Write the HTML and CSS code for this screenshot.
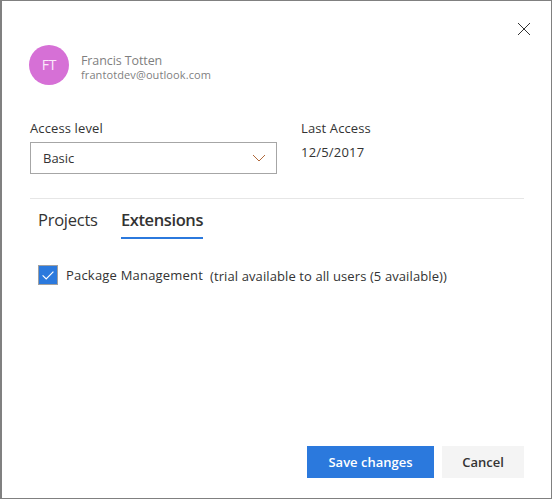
FILE: index.html
```html
<!DOCTYPE html>
<html lang="en">
<head>
<meta charset="utf-8">
<title>Manage user</title>
<link rel="stylesheet" href="styles.css">
</head>
<body>
<main class="dialog">
  <button class="close" aria-label="Close"><svg width="14" height="14" viewBox="0 0 14 14"><path d="M1 1 13 13M13 1 1 13"/></svg></button>
  <header class="user">
    <div class="avatar"><span>FT</span></div>
    <div class="identity">
      <span class="name">Francis Totten</span>
      <span class="email">frantotdev@outlook.com</span>
    </div>
  </header>
  <section class="access">
    <div class="level">
      <span class="label level-label">Access level</span>
      <div class="select"><span class="basic">Basic</span><svg width="14" height="8" viewBox="0 0 14 8"><path d="M1 1 7 7 13 1"/></svg></div>
    </div>
    <div class="last">
      <span class="label last-label">Last Access</span>
      <span class="date">12/5/2017</span>
    </div>
  </section>
  <nav class="tabs">
    <span class="tab projects">Projects</span>
    <span class="tab active">Extensions</span>
  </nav>
  <div class="option">
    <span class="checkbox"><svg width="12" height="9" viewBox="0 0 12 9"><path d="M.6 4.3 4.2 7.9 11.4.7"/></svg></span>
    <span class="package">Package Management</span>
    <span class="note">(trial available to all users (5 available))</span>
  </div>
  <footer class="actions">
    <button class="btn primary"><span>Save changes</span></button>
    <button class="btn cancel"><span>Cancel</span></button>
  </footer>
</main>
</body>
</html>
```
FILE: styles.css
```css
* { box-sizing: border-box; }
body { margin: 0; }
.dialog {
  position: relative;
  display: flex;
  flex-direction: column;
  width: 552px;
  height: 499px;
  padding: 44px 27px 20px 27px;
  border: 1px solid #808080;
  border-left-width: 2px;
  background: #fff;
  color: #333;
  font: 13px/18px "Open Sans", "Noto Sans", sans-serif;
  white-space: nowrap;
}
button { font: inherit; color: inherit; border: 0; padding: 0; }
svg { display: block; fill: none; }
.close { position: absolute; top: 21px; right: 20px; background: none; }
.close svg { stroke: #333; stroke-width: 1; }
.user { display: flex; gap: 12px; height: 40px; }
.avatar {
  display: flex;
  align-items: center;
  justify-content: center;
  width: 40px;
  height: 40px;
  border-radius: 50%;
  background: #d670d6;
  color: #fbeafb;
  font-size: 14px;
}
.avatar span { letter-spacing: -.2px; }
.identity { display: flex; flex-direction: column; padding-top: 8px; color: #7f7f7f; }
.name { font-size: 12.5px; line-height: 16px; letter-spacing: -.1px; }
.email { font-size: 11px; line-height: 12px; letter-spacing: .1px; }
.access {
  display: flex;
  gap: 24px;
  height: 114px;
  padding-top: 34px;
  margin-left: 1px;
  border-bottom: 1px solid #e6e6e6;
}
.level, .last { display: flex; flex-direction: column; }
.label { height: 23px; letter-spacing: .12px; }
.date { margin-top: 1px; letter-spacing: .2px; }
.select {
  display: flex;
  align-items: center;
  justify-content: space-between;
  width: 247px;
  height: 32px;
  padding: 0 10px 0 12px;
  border: 1px solid #a6a6a6;
}
.select svg { stroke: #b0693c; }
.tabs { display: flex; height: 40px; margin-left: 9px; font-size: 16.5px; line-height: 41px; }
.tab { height: 40px; }
.projects { width: 83px; letter-spacing: -.25px; }
.active { width: 82px; border-bottom: 2px solid #2b79dd; font-weight: 600; letter-spacing: -.4px; }
.option { display: flex; align-items: center; height: 20px; margin: 26px 0 0 9px; }
.checkbox {
  display: grid;
  place-items: center;
  width: 20px;
  height: 20px;
  border: 1px solid #a0a0a0;
  background: #2b79dd;
}
.checkbox svg { stroke: #fff; stroke-width: 1.2; }
.package { width: 137px; margin: 0 7px 0 8px; letter-spacing: .2px; }
.note { margin-top: 2px; letter-spacing: .1px; }
.actions { display: flex; justify-content: flex-end; gap: 8px; margin-top: auto; }
.btn { height: 32px; font-weight: 600; }
.primary { width: 127px; background: #2b79dd; color: #fff; }
.cancel { width: 82px; background: #f4f4f4; }
```
